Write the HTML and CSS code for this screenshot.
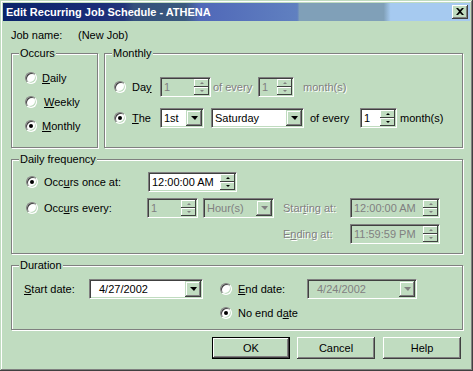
FILE: index.html
```html
<!DOCTYPE html>
<html lang="en">
<head>
  <meta charset="UTF-8" />
  <title>Edit Recurring Job Schedule - ATHENA</title>
  <link rel="stylesheet" href="styles.css">
</head>
<body>
  <div class="window">
    <div class="titlebar">
      <span class="title">Edit Recurring Job Schedule - ATHENA</span>
      <span class="close-btn">
        <svg width="8" height="7" viewBox="0 0 8 7"><path d="M0 0h2l2 2 2-2h2L5 3.5 8 7H6L4 5 2 7H0l3-3.5z" fill="#000"/></svg>
      </span>
    </div>

    <div class="content">
      <div class="job-row">
        <span class="job-label">Job name:</span>
        <span>(New Job)</span>
      </div>

      <div class="top-row">
        <div class="group occurs">
          <span class="group-title">Occurs</span>
          <div class="occurs-list">
            <div class="choice"><span class="radio"></span><span><u>D</u>aily</span></div>
            <div class="choice"><span class="radio"></span><span class="pad-l"><u>W</u>eekly</span></div>
            <div class="choice"><span class="radio checked"></span><span><u>M</u>onthly</span></div>
          </div>
        </div>

        <div class="group monthly">
          <span class="group-title">Monthly</span>
          <div class="monthly-rows">
            <div class="row">
              <div class="choice c-day"><span class="radio"></span><span>Da<u>y</u></span></div>
              <div class="field spin disabled w-day">
                <span class="value">1</span>
                <span class="spin-btns"><span class="up"></span><span class="down"></span></span>
              </div>
              <span class="dim t-every1">of every</span>
              <div class="field spin disabled w-month1">
                <span class="value">1</span>
                <span class="spin-btns"><span class="up"></span><span class="down"></span></span>
              </div>
              <span class="dim t-months1">month(s)</span>
            </div>
            <div class="row">
              <div class="choice c-day"><span class="radio checked"></span><span><u>T</u>he</span></div>
              <div class="field combo w-first">
                <span class="value">1st</span>
                <span class="drop-btn"></span>
              </div>
              <div class="field combo w-weekday">
                <span class="value">Saturday</span>
                <span class="drop-btn"></span>
              </div>
              <span class="t-every2">of every</span>
              <div class="field spin w-month2">
                <span class="value">1</span>
                <span class="spin-btns"><span class="up"></span><span class="down"></span></span>
              </div>
              <span class="t-months2">month(s)</span>
            </div>
          </div>
        </div>
      </div>

      <div class="group daily">
        <span class="group-title">Daily frequency</span>
        <div class="daily-rows">
          <div class="row">
            <div class="choice c-once"><span class="radio checked"></span><span>Occ<u>u</u>rs once at:</span></div>
            <div class="field spin w-time">
              <span class="value">12:00:00 AM</span>
              <span class="spin-btns"><span class="up"></span><span class="down"></span></span>
            </div>
          </div>
          <div class="row">
            <div class="choice c-every"><span class="radio"></span><span>Occ<u>u</u>rs every:</span></div>
            <div class="field spin disabled w-every">
              <span class="value">1</span>
              <span class="spin-btns"><span class="up"></span><span class="down"></span></span>
            </div>
            <div class="field combo disabled w-hours">
              <span class="value">Hour(s)</span>
              <span class="drop-btn"></span>
            </div>
            <span class="dim range-label">Star<u>t</u>ing at:</span>
            <div class="field spin disabled w-range">
              <span class="value">12:00:00 AM</span>
              <span class="spin-btns"><span class="up"></span><span class="down"></span></span>
            </div>
          </div>
          <div class="row">
            <span class="dim range-label ending">E<u>n</u>ding at:</span>
            <div class="field spin disabled w-range">
              <span class="value">11:59:59 PM</span>
              <span class="spin-btns"><span class="up"></span><span class="down"></span></span>
            </div>
          </div>
        </div>
      </div>

      <div class="group duration">
        <span class="group-title">Duration</span>
        <div class="duration-rows">
          <div class="row">
            <span class="start-label"><u>S</u>tart date:</span>
            <div class="field combo date w-start">
              <span class="value">4/27/2002</span>
              <span class="drop-btn"></span>
            </div>
            <div class="choice c-end"><span class="radio"></span><span><u>E</u>nd date:</span></div>
            <div class="field combo date disabled w-end">
              <span class="value">4/24/2002</span>
              <span class="drop-btn"></span>
            </div>
          </div>
          <div class="row">
            <div class="choice c-noend"><span class="radio checked"></span><span>No end d<u>a</u>te</span></div>
          </div>
        </div>
      </div>

      <div class="buttons">
        <button class="btn default">OK</button>
        <button class="btn">Cancel</button>
        <button class="btn help">Help</button>
      </div>
    </div>
  </div>
</body>
</html>
```

FILE: styles.css
```css
body {
  margin: 0;
  font-family: 'Liberation Sans', Arial, sans-serif;
  font-size: 11px;
  color: #000;
  background: #c0dcc0;
}

.window {
  width: 473px;
  height: 371px;
  box-sizing: border-box;
  padding: 3px;
  background: #c0dcc0;
  box-shadow: inset -1px -1px #404040, inset 1px 1px #c0dcc0,
              inset -2px -2px #808080, inset 2px 2px #fff;
}

.titlebar {
  height: 18px;
  display: flex;
  align-items: center;
  justify-content: space-between;
  padding: 0 2px;
  background: linear-gradient(to right, #0a246a 0%, #1a2c78 20%, #22357a 26%,
    #34507c 28%, #3a5a7e 39%, #5068b8 42%, #6080c0 63%, #80a0b8 63.5%,
    #80a0b8 81.5%, #a6caf0 83%, #a6caf0 100%);
}

.title {
  color: #fff;
  font-weight: bold;
  padding-left: 1px;
}

.close-btn {
  width: 16px;
  height: 14px;
  box-sizing: border-box;
  background: #c0dcc0;
  box-shadow: inset -1px -1px #404040, inset 1px 1px #fff, inset -2px -2px #808080;
  display: flex;
  align-items: center;
  justify-content: center;
  padding: 0 1px 1px 0;
}

.content {
  padding: 0 7px 0 8px;
}

.job-row {
  margin-top: 8px;
  height: 13px;
  line-height: 13px;
  display: flex;
}

.job-label {
  width: 67px;
}

/* group boxes */
.top-row {
  display: flex;
  margin-top: 11px;
}

.group {
  box-sizing: border-box;
  border: 1px solid #808080;
  box-shadow: inset 1px 1px #fff, 1px 1px #fff;
}

.group-title {
  display: block;
  width: fit-content;
  height: 13px;
  line-height: 13px;
  margin: -7px 0 0 7px;
  padding: 0 1px;
  background: #c0dcc0;
}

.occurs { width: 87px; height: 95px; }
.monthly { width: 359px; height: 95px; margin-left: 6px; }
.daily { height: 95px; margin-top: 11px; }
.duration { height: 65px; margin-top: 11px; }

.occurs-list {
  display: flex;
  flex-direction: column;
  gap: 4px;
  padding: 8px 0 0 13px;
}

.monthly-rows {
  display: flex;
  flex-direction: column;
  gap: 11px;
  padding: 17px 0 0 9px;
}

.daily-rows {
  display: flex;
  flex-direction: column;
  gap: 6px;
  padding: 6px 0 0 14px;
}

.duration-rows {
  display: flex;
  flex-direction: column;
  gap: 4px;
  padding: 7px 0 0 12px;
}

.row {
  display: flex;
  align-items: center;
  height: 20px;
  white-space: nowrap;
}

/* radios */
.choice {
  display: flex;
  align-items: center;
  height: 20px;
  white-space: nowrap;
}

.radio {
  position: relative;
  width: 12px;
  height: 12px;
  box-sizing: border-box;
  flex-shrink: 0;
  margin-right: 6px;
  border-radius: 50%;
  border: 1px solid;
  border-color: #808080 #fff #fff #808080;
  box-shadow: inset 1px 1px #404040, inset -1px -1px #c0dcc0;
  background: #fff;
}

.occurs .radio { margin-right: 5px; }

.radio.checked::after {
  content: "";
  position: absolute;
  left: 3px;
  top: 3px;
  width: 4px;
  height: 4px;
  border-radius: 50%;
  background: #000;
}

.pad-l { padding-left: 2px; }

.c-day { width: 46px; }
.c-once { width: 122px; }
.c-every { width: 121px; }
.c-end { width: 87px; margin-left: 17px; }
.c-noend { margin-left: 196px; }

.dim {
  color: #808080;
  text-shadow: 1px 1px #fff;
}

.t-every1 { width: 45px; margin-left: 2px; }
.t-months1 { margin-left: 9px; }
.t-every2 { width: 50px; margin-left: 6px; }
.t-months2 { margin-left: 3px; }
.range-label { width: 67px; margin-left: 9px; }
.range-label.ending { margin-left: 257px; }
.start-label { width: 65px; }

/* edit, spin and combo fields */
.field {
  box-sizing: border-box;
  height: 20px;
  display: flex;
  padding: 1px;
  border: 1px solid;
  border-color: #808080 #fff #fff #808080;
  box-shadow: inset 1px 1px #404040, inset -1px -1px #c0dcc0;
  background: #fff;
}

.field.disabled {
  background: #c0dcc0;
  color: #808080;
}

.value {
  flex: 1;
  padding-left: 2px;
  line-height: 16px;
  overflow: hidden;
  white-space: nowrap;
}

.date .value { padding-left: 8px; }

.spin-btns {
  width: 15px;
  display: flex;
  flex-direction: column;
}

.spin-btns span {
  flex: 1;
  display: flex;
  align-items: center;
  justify-content: center;
  background: #c0dcc0;
  box-shadow: inset -1px -1px #404040, inset 1px 1px #fff;
}

.spin-btns .up::after {
  content: "";
  border-left: 2px solid transparent;
  border-right: 2px solid transparent;
  border-bottom: 2px solid #000;
}

.spin-btns .down::after {
  content: "";
  border-left: 2px solid transparent;
  border-right: 2px solid transparent;
  border-top: 2px solid #000;
}

.disabled .spin-btns .up::after { border-bottom-color: #808080; }
.disabled .spin-btns .down::after { border-top-color: #808080; }

.drop-btn {
  width: 16px;
  display: flex;
  align-items: center;
  justify-content: center;
  background: #c0dcc0;
  box-shadow: inset -1px -1px #404040, inset 1px 1px #c0dcc0,
              inset -2px -2px #808080, inset 2px 2px #fff;
}

.drop-btn::after {
  content: "";
  border-left: 4px solid transparent;
  border-right: 3px solid transparent;
  border-top: 4px solid #000;
}

.disabled .drop-btn::after { border-top-color: #808080; }

.w-day { width: 51px; }
.w-month1 { width: 36px; }
.w-first { width: 44px; }
.w-weekday { width: 93px; margin-left: 7px; }
.w-month2 { width: 37px; }
.w-time { width: 89px; }
.w-every { width: 51px; }
.w-hours { width: 71px; margin-left: 5px; }
.w-range { width: 90px; }
.w-start { width: 114px; }
.w-end { width: 110px; }

/* buttons */
.buttons {
  display: flex;
  justify-content: flex-end;
  margin-top: 7px;
  padding-right: 2px;
}

.btn {
  width: 78px;
  height: 22px;
  box-sizing: border-box;
  margin-left: 7px;
  padding: 0;
  border: 0;
  font: inherit;
  color: #000;
  background: #c0dcc0;
  box-shadow: inset -1px -1px #404040, inset 1px 1px #fff,
              inset -2px -2px #808080, inset 2px 2px #c0dcc0;
}

.btn.default {
  border: 1px solid #000;
}

.btn.help { margin-left: 8px; }
```
